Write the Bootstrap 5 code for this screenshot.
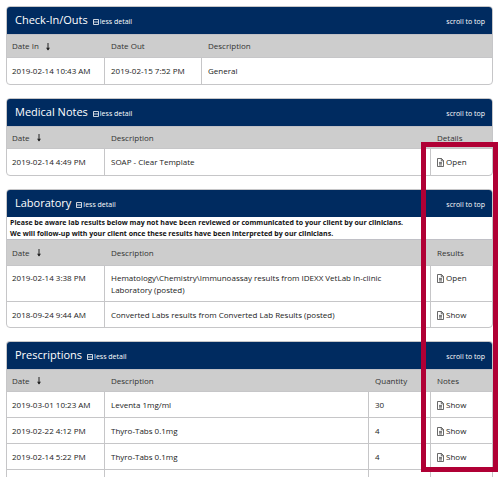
<!DOCTYPE html>
<html lang="en">
<head>
<meta charset="utf-8">
<meta name="viewport" content="width=device-width, initial-scale=1">
<title>Patient history</title>
<link href="https://cdn.jsdelivr.net/npm/bootstrap@5.3.0/dist/css/bootstrap.min.css" rel="stylesheet">
<style>
  body { font-family: "Open Sans", "Noto Sans", sans-serif; font-size: 8px; line-height: 12px; color: #222; background: #fff; }
  .page { padding: 6px 7px 0 6px; }
  .panel { border: 1px solid #c6c6c8; border-radius: 4px; margin-bottom: 13px; overflow: hidden; }
  .panel-open { border-bottom: 0; border-radius: 4px 4px 0 0; margin-bottom: 0; }
  .panel-bar { background: #002b60; color: #fff; height: 28px; margin: -1px -1px 0; padding: 0 8px 0 9px; }
  .panel-bar h2 { font-size: 11px; line-height: 16px; font-weight: 400; }
  .panel-bar a, .toggle { color: #fff; font-size: 7px; line-height: 10px; }
  .panel-bar a { padding-top: 4px; }
  .toggle { padding: 4px 0 0; gap: 1px; margin-left: 5px; }
  .toggle svg { flex: none; }
  .history { table-layout: fixed; width: 100%; border-collapse: separate; border-spacing: 0; }
  .history th { background: #cdcdcd; color: #333; font-weight: 400; border-top: 1px solid #c0c0c6; border-bottom: 1px solid #c6c6c8; height: 23px; padding: 0 7px; }
  .history td { height: 26px; padding: 0 6px; border-left: 1px solid #c6c6c8; border-bottom: 1px solid #c6c6c8; }
  .history td:first-child { border-left: 0; }
  .history td + td { padding-left: 6px; }
  .history th:first-child, .history td:first-child { padding-left: 5px; }
  .history td.wide { padding-right: 32px; }
  .panel:not(.panel-open) tbody tr:last-child td { border-bottom: 0; }
  .history a { color: #222; }
  .visits th { height: 24px; }
  .lab th { height: 27px; }
  .lab td { height: 25px; }
  .lab .two-line td { height: 36px; vertical-align: top; padding-top: 6px; }
  .history .cut td { height: 7px; border-bottom: 0; }
  .col-date { width: 97px; }
  .col-link { width: 62px; }
  .col-note { font-size: 7px; line-height: 11px; color: #111; font-weight: 700; padding: 0 3px; }
  .highlight { position: absolute; top: 142px; right: 2px; width: 77px; height: 330px; border: 5px solid #b00035; pointer-events: none; }
</style>
<script src="https://cdn.jsdelivr.net/npm/bootstrap@5.3.0/dist/js/bootstrap.bundle.min.js"></script>
</head>
<body>
<svg class="d-none" aria-hidden="true">
  <symbol id="minus-box" viewBox="0 0 6 6"><path d="M.5.5h5v5h-5zM.5 3h5" fill="none" stroke="#fff" stroke-width=".8"/></symbol>
  <symbol id="down" viewBox="0 0 6 8"><path d="M3 0v7" fill="none" stroke="#222" stroke-width="1"/><path d="M1 4.8 3 7.5l2-2.7z" fill="#222"/></symbol>
  <symbol id="doc" viewBox="0 0 7 9"><path d="M.5.5h4l2 2v6h-6zM4.3.5v2.3h2.2M2 4.4h3M2 5.7h3M2 7h3" fill="none" stroke="#444" stroke-width=".8"/></symbol>
</svg>
<main class="page position-relative">
  <section class="panel">
    <header class="panel-bar d-flex align-items-center">
      <h2 class="m-0">Check-In/Outs</h2>
      <button type="button" class="toggle btn border-0 d-inline-flex align-items-center"><svg width="6" height="6"><use href="#minus-box"/></svg><span>less detail</span></button>
      <a href="#" class="ms-auto text-decoration-none">scroll to top</a>
    </header>
    <table class="history visits">
      <colgroup><col class="col-date"><col class="col-date"><col></colgroup>
      <thead><tr><th>Date In <svg class="ms-1" width="6" height="8"><use href="#down"/></svg></th><th>Date Out</th><th>Description</th></tr></thead>
      <tbody><tr><td>2019-02-14 10:43 AM</td><td>2019-02-15 7:52 PM</td><td>General</td></tr></tbody>
    </table>
  </section>

  <section class="panel">
    <header class="panel-bar d-flex align-items-center">
      <h2 class="m-0">Medical Notes</h2>
      <button type="button" class="toggle btn border-0 d-inline-flex align-items-center"><svg width="6" height="6"><use href="#minus-box"/></svg><span>less detail</span></button>
      <a href="#" class="ms-auto text-decoration-none">scroll to top</a>
    </header>
    <table class="history">
      <colgroup><col class="col-date"><col><col class="col-link"></colgroup>
      <thead><tr><th>Date <svg class="ms-1" width="6" height="8"><use href="#down"/></svg></th><th>Description</th><th>Details</th></tr></thead>
      <tbody><tr><td>2019-02-14 4:49 PM</td><td>SOAP - Clear Template</td><td><a href="#" class="text-decoration-none"><svg width="7" height="9"><use href="#doc"/></svg> Open</a></td></tr></tbody>
    </table>
  </section>

  <section class="panel">
    <header class="panel-bar d-flex align-items-center">
      <h2 class="m-0">Laboratory</h2>
      <button type="button" class="toggle btn border-0 d-inline-flex align-items-center"><svg width="6" height="6"><use href="#minus-box"/></svg><span>less detail</span></button>
      <a href="#" class="ms-auto text-decoration-none">scroll to top</a>
    </header>
    <p class="col-note m-0">Please be aware lab results below may not have been reviewed or communicated to your client by our clinicians.<br>We will follow-up with your client once these results have been interpreted by our clinicians.</p>
    <table class="history lab">
      <colgroup><col class="col-date"><col><col class="col-link"></colgroup>
      <thead><tr><th>Date <svg class="ms-1" width="6" height="8"><use href="#down"/></svg></th><th>Description</th><th>Results</th></tr></thead>
      <tbody>
        <tr class="two-line"><td>2019-02-14 3:38 PM</td><td class="wide">Hematology\Chemistry\Immunoassay results from IDEXX VetLab In-clinic Laboratory (posted)</td><td><a href="#" class="text-decoration-none"><svg width="7" height="9"><use href="#doc"/></svg> Open</a></td></tr>
        <tr><td>2018-09-24 9:44 AM</td><td class="wide">Converted Labs results from Converted Lab Results (posted)</td><td><a href="#" class="text-decoration-none"><svg width="7" height="9"><use href="#doc"/></svg> Show</a></td></tr>
      </tbody>
    </table>
  </section>

  <section class="panel panel-open">
    <header class="panel-bar d-flex align-items-center">
      <h2 class="m-0">Prescriptions</h2>
      <button type="button" class="toggle btn border-0 d-inline-flex align-items-center"><svg width="6" height="6"><use href="#minus-box"/></svg><span>less detail</span></button>
      <a href="#" class="ms-auto text-decoration-none">scroll to top</a>
    </header>
    <table class="history">
      <colgroup><col class="col-date"><col><col class="col-link"><col class="col-link"></colgroup>
      <thead><tr><th>Date <svg class="ms-1" width="6" height="8"><use href="#down"/></svg></th><th>Description</th><th>Quantity</th><th>Notes</th></tr></thead>
      <tbody>
        <tr><td>2019-03-01 10:23 AM</td><td>Leventa 1mg/ml</td><td>30</td><td><a href="#" class="text-decoration-none"><svg width="7" height="9"><use href="#doc"/></svg> Show</a></td></tr>
        <tr><td>2019-02-22 4:12 PM</td><td>Thyro-Tabs 0.1mg</td><td>4</td><td><a href="#" class="text-decoration-none"><svg width="7" height="9"><use href="#doc"/></svg> Show</a></td></tr>
        <tr><td>2019-02-14 5:22 PM</td><td>Thyro-Tabs 0.1mg</td><td>4</td><td><a href="#" class="text-decoration-none"><svg width="7" height="9"><use href="#doc"/></svg> Show</a></td></tr>
        <tr class="cut"><td></td><td></td><td></td><td></td></tr>
      </tbody>
    </table>
  </section>
  <div class="highlight"></div>
</main>
</body>
</html>
